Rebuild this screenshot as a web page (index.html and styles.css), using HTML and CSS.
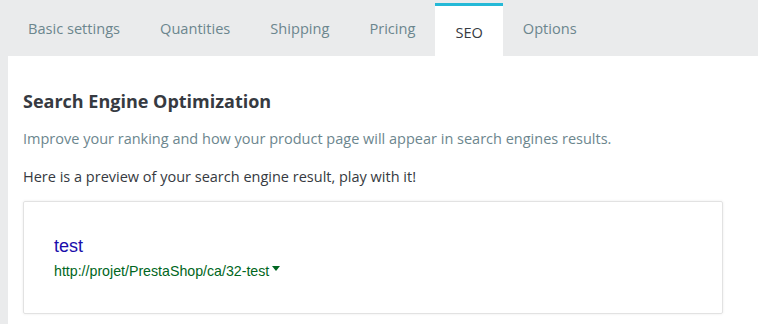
FILE: index.html
```html
<!DOCTYPE html>
<html lang="en">
<head>
  <meta charset="UTF-8" />
  <meta name="viewport" content="width=device-width, initial-scale=1.0"/>
  <title>Product SEO</title>
  <link rel="stylesheet" href="styles.css">
</head>
<body>
  <ul class="tabs">
    <li class="tab">Basic settings</li>
    <li class="tab">Quantities</li>
    <li class="tab">Shipping</li>
    <li class="tab">Pricing</li>
    <li class="tab active">SEO</li>
    <li class="tab">Options</li>
  </ul>

  <div class="panel">
    <h2>Search Engine Optimization</h2>
    <p class="help">Improve your ranking and how your product page will appear in search engines results.</p>
    <p class="intro">Here is a preview of your search engine result, play with it!</p>

    <div class="serp">
      <div class="serp-title">test</div>
      <div class="serp-url">http://projet/PrestaShop/ca/32-test<span class="caret"></span></div>
    </div>
  </div>
</body>
</html>
```

FILE: styles.css
```css
body {
  margin: 0;
  background: #eaebec;
  font-family: 'Open Sans', sans-serif;
  color: #363a41;
}

.tabs {
  display: flex;
  list-style: none;
  margin: 0;
  padding: 0 0 0 8px;
  height: 56px;
}

.tab {
  padding: 18px 20px 0;
  font-size: 14.6px;
  line-height: 21px;
  color: #6c868e;
}

.tab.active {
  margin-top: 3px;
  padding-top: 16px;
  border-top: 3px solid #25b9d7;
  background: #fff;
  color: #363a41;
}

.panel {
  background: #fff;
  margin-left: 8px;
  padding: 33px 35px 11px 15px;
}

.panel h2 {
  margin: 0 0 15px;
  font-size: 18px;
  line-height: 24px;
  font-weight: 700;
}

.help {
  margin: 0 0 17px;
  font-size: 14.5px;
  line-height: 21px;
  color: #6c868e;
}

.intro {
  margin: 0 0 14px;
  font-size: 14.5px;
  line-height: 21px;
}

.serp {
  border: 1px solid #e2e2e2;
  border-radius: 2px;
  box-shadow: 0 0 3px rgba(0, 0, 0, 0.08);
  padding: 33px 30px 32px;
  font-family: 'Liberation Sans', Arial, sans-serif;
}

.serp-title {
  font-size: 18px;
  line-height: 22px;
  color: #1a0dab;
}

.serp-url {
  margin-top: 4px;
  font-size: 14.2px;
  line-height: 20px;
  color: #006621;
}

.caret {
  display: inline-block;
  vertical-align: top;
  margin: 5px 0 0 3px;
  border-left: 4px solid transparent;
  border-right: 4px solid transparent;
  border-top: 5px solid #006621;
}
```
